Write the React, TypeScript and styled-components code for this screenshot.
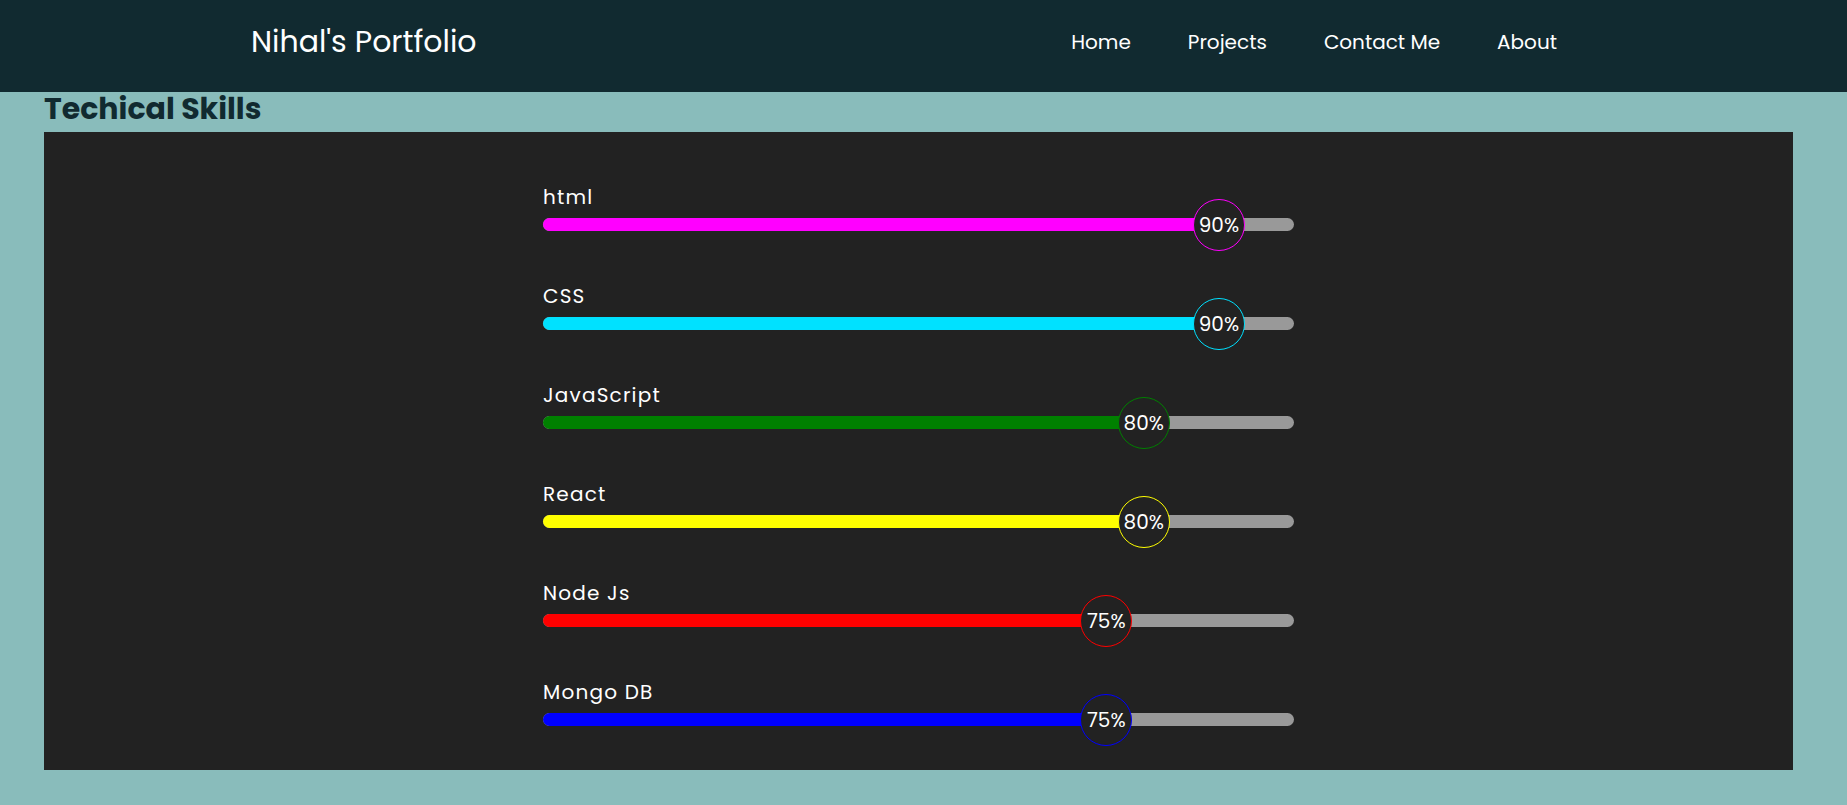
import React from "react";
import styled, { createGlobalStyle } from "styled-components";

const GlobalStyle = createGlobalStyle`
  * { box-sizing: border-box; }
  html, body {
    margin: 0;
    padding: 0;
    background: #89bcbb;
    font-family: "Poppins", Inter, "Noto Sans", sans-serif;
  }
  #root { min-height: 100vh; }
`;

const Header = styled.header`
  height: 92px;
  background: #112a30;
  display: flex;
  align-items: center;
  justify-content: space-between;
  padding: 0 290px 8px 251px;
`;

const Brand = styled.div`
  color: #ffffff;
  font-size: 30px;
  font-weight: 400;
  line-height: 1;
`;

const Nav = styled.nav`
  display: flex;
  gap: 57px;
`;

const NavLink = styled.a`
  color: #ffffff;
  font-size: 20px;
  font-weight: 400;
  text-decoration: none;
  line-height: 1;
`;

const Main = styled.main`
  padding: 0 54px 0 44px;
`;

const Heading = styled.h2`
  margin: 0;
  height: 40px;
  color: #112a30;
  font-size: 30px;
  font-weight: 700;
  line-height: 33px;
`;

const Card = styled.section`
  background: #222222;
  padding: 52px 0 44px;
`;

const SkillList = styled.div`
  width: 751px;
  margin: 0 auto;
  display: flex;
  flex-direction: column;
  gap: 52px;
`;

const Skill = styled.div`
  display: flex;
  flex-direction: column;
  gap: 8px;
`;

const Label = styled.div`
  color: #ffffff;
  font-size: 20px;
  letter-spacing: 1.2px;
  line-height: 26px;
`;

const Track = styled.div`
  position: relative;
  height: 13px;
  border-radius: 7px;
  background: #999999;
`;

const Fill = styled.div<{ $color: string }>`
  height: 100%;
  border-radius: 7px 0 0 7px;
  background: ${(p) => p.$color};
`;

const Badge = styled.div<{ $color: string }>`
  position: absolute;
  top: 50%;
  transform: translate(-50%, -50%);
  width: 52px;
  height: 52px;
  border-radius: 50%;
  border: 1px solid ${(p) => p.$color};
  background: #222222;
  color: #ffffff;
  font-size: 20px;
  display: flex;
  align-items: center;
  justify-content: center;
`;

const skills = [
  { name: "html", pct: 90, color: "#ff00ff" },
  { name: "CSS", pct: 90, color: "#00e1ff" },
  { name: "JavaScript", pct: 80, color: "#008000" },
  { name: "React", pct: 80, color: "#ffff00" },
  { name: "Node Js", pct: 75, color: "#ff0000" },
  { name: "Mongo DB", pct: 75, color: "#0000ff" },
];

export default function App() {
  return (
    <>
      <GlobalStyle />
      <Header>
        <Brand>Nihal's Portfolio</Brand>
        <Nav>
          <NavLink href="#">Home</NavLink>
          <NavLink href="#">Projects</NavLink>
          <NavLink href="#">Contact Me</NavLink>
          <NavLink href="#">About</NavLink>
        </Nav>
      </Header>
      <Main>
        <Heading>Techical Skills</Heading>
        <Card>
          <SkillList>
            {skills.map((s) => (
              <Skill key={s.name}>
                <Label>{s.name}</Label>
                <Track>
                  <Fill $color={s.color} style={{ width: `${s.pct}%` }} />
                  <Badge $color={s.color} style={{ left: `${s.pct}%` }}>
                    {s.pct}%
                  </Badge>
                </Track>
              </Skill>
            ))}
          </SkillList>
        </Card>
      </Main>
    </>
  );
}
